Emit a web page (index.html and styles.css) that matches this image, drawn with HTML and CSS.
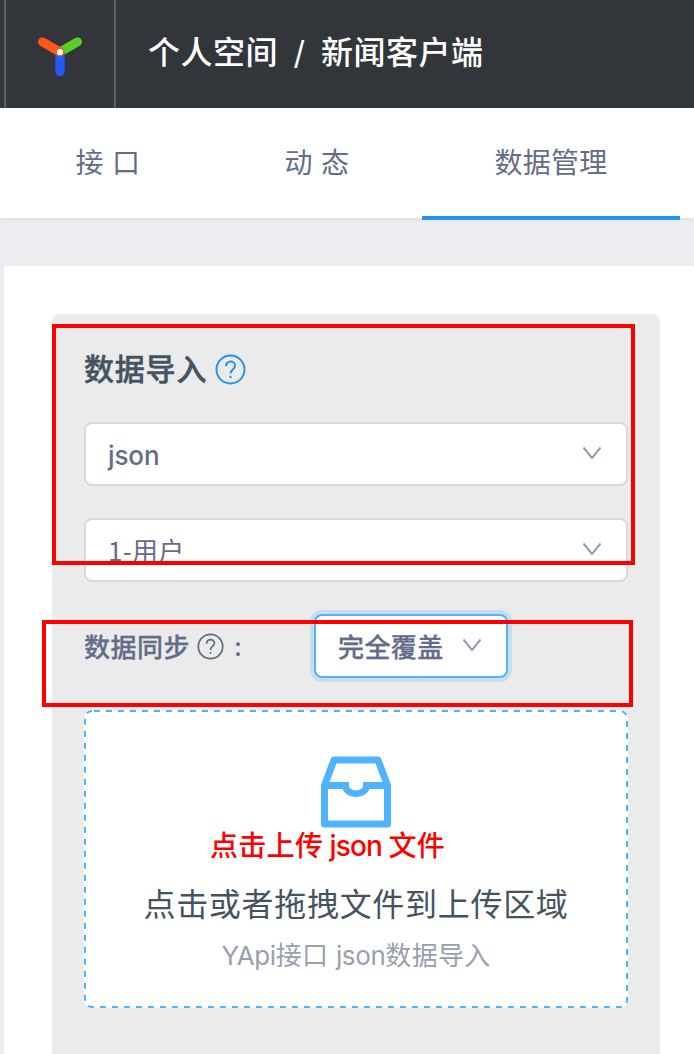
FILE: index.html
```html
<!DOCTYPE html>
<html lang="zh-CN">
<head>
<meta charset="utf-8">
<title>新闻客户端 - 数据管理</title>
<link rel="stylesheet" href="styles.css">
</head>
<body>
<header class="header">
  <a class="logo">
    <svg width="46" height="42" viewBox="0 0 46 42" fill="none" stroke-linecap="round">
      <path d="M23 18L40.500 7.900" stroke="#57cf27" stroke-width="9"/>
      <path d="M23 20V37.500" stroke="#2459f6" stroke-width="9.300"/>
      <path d="M5.500 7.900L23 18" stroke="#ff561b" stroke-width="9"/>
      <circle cx="23" cy="18" r="3.100" fill="#fff"/>
    </svg>
  </a>
  <div class="breadcrumb"><span>个人空间</span><span class="slash">/</span><span>新闻客户端</span></div>
</header>
<nav class="tabs">
  <a class="tab">接 口</a>
  <a class="tab">动 态</a>
  <a class="tab tab-active">数据管理</a>
</nav>
<main class="content">
  <section class="panel">
    <h2 class="title"><span class="title-text">数据导入</span>
      <svg class="help" width="31" height="31" viewBox="0 0 31 31" fill="none" stroke="currentColor" stroke-width="2">
        <circle cx="15.500" cy="15.500" r="14"/>
        <path d="M11 12.300C11 9.300 13 7.600 15.500 7.600S20 9.400 20 11.900C20 15 15.600 15.500 15.600 19.400"/>
        <circle cx="15.500" cy="23" r="1.200" fill="currentColor" stroke="none"/>
      </svg>
    </h2>
    <div class="select"><span class="medium latin">json</span><svg class="arrow" width="20" height="14" viewBox="0 0 20 14"><path d="M1.500 1.500L10 12L18.500 1.500"/></svg></div>
    <div class="select"><span class="category">1-用户</span><svg class="arrow" width="20" height="14" viewBox="0 0 20 14"><path d="M1.500 1.500L10 12L18.500 1.500"/></svg></div>
    <div class="sync">
      <div class="sync-label"><span class="raised">数据同步</span>
        <svg class="help-small" width="27" height="27" viewBox="0 0 31 31" fill="none" stroke="currentColor" stroke-width="2">
          <circle cx="15.500" cy="15.500" r="14"/>
          <path d="M11 12.300C11 9.300 13 7.600 15.500 7.600S20 9.400 20 11.900C20 15 15.600 15.500 15.600 19.400"/>
          <circle cx="15.500" cy="23" r="1.200" fill="currentColor" stroke="none"/>
        </svg><span class="colon">:</span>
      </div>
      <div class="select select-focus"><span class="medium raised">完全覆盖</span><svg class="arrow" width="20" height="14" viewBox="0 0 20 14"><path d="M1.500 1.500L10 12L18.500 1.500"/></svg></div>
    </div>
    <div class="upload">
      <svg class="outline" width="544" height="298"><rect x="1" y="1" width="542" height="296" rx="7" fill="none" stroke="#4fb3fd" stroke-width="2" stroke-dasharray="6 6" stroke-dashoffset="-2"/></svg>
      <svg class="inbox" width="72" height="72" viewBox="0 0 72 72" fill="none" stroke="#4fb3fd" stroke-width="7" stroke-linejoin="round">
        <path d="M4.500 29.500L14 4H58L67.500 29.500V68H4.500Z"/>
        <path d="M4.500 29.500H25.500C25.500 34.500 30.500 37.700 36 37.700S46.500 34.500 46.500 29.500H67.500" stroke-linejoin="miter"/>
      </svg>
      <p class="upload-text">点击或者拖拽文件到上传区域</p>
      <p class="upload-hint"><span class="tight">YApi</span>接口 <span class="tight">json</span>数据导入</p>
      <span class="note">点击上传 <span class="tight">json</span> 文件</span>
    </div>
    <div class="mark mark-source"></div>
    <div class="mark mark-sync"></div>
  </section>
</main>
</body>
</html>
```
FILE: styles.css
```css
* { box-sizing: border-box; }
body {
  margin: 0;
  height: 1054px;
  overflow: hidden;
  display: flex;
  flex-direction: column;
  background: #ecedf1;
  color: #636c88;
  font-family: Inter, "Noto Sans CJK SC", sans-serif;
  font-size: 26px;
}
p, h2 { margin: 0; }
svg { display: block; flex: none; }
.header {
  height: 108px;
  flex: none;
  display: flex;
  padding-left: 4px;
  background: #32363a;
}
.logo {
  width: 112px;
  padding: 34px 0 0 31px;
  border-left: 2px solid #56626d;
  border-right: 2px solid #56626d;
}
.breadcrumb {
  display: flex;
  padding-left: 32px;
  color: #fff;
  font-size: 32px;
  font-weight: 500;
  line-height: 106px;
  letter-spacing: .5px;
}
.slash { width: 43px; text-align: center; font-weight: 400; }
.tabs {
  position: relative;
  height: 110px;
  flex: none;
  display: flex;
  gap: 1px;
  padding-left: 4px;
  background: #fff;
  box-shadow: 0 2px 4px rgba(0, 21, 41, .06);
}
.tab {
  width: 208px;
  height: 112px;
  text-align: center;
  font-size: 28px;
  line-height: 110px;
  letter-spacing: .3px;
}
.tab-active { width: 258px; border-bottom: 4px solid #2395f1; }
.content {
  flex: 1;
  margin: 48px 0 0 4px;
  padding: 48px 34px 0 48px;
  background: #fff;
}
.panel {
  position: relative;
  height: 760px;
  padding: 32px;
  border-radius: 8px;
  background: #ebebeb;
}
.title {
  display: flex;
  align-items: center;
  gap: 8px;
  height: 46px;
  margin-bottom: 30px;
  color: #455361;
  font-size: 30px;
  font-weight: 500;
  letter-spacing: .8px;
}
.title-text {
  padding-bottom: 4px;
  -webkit-text-stroke: .5px currentColor;
}
.help { color: #2395f1; }
.select {
  display: flex;
  align-items: center;
  justify-content: space-between;
  height: 64px;
  margin-bottom: 32px;
  padding: 0 24px 0 22px;
  border: 2px solid #d9d9d9;
  border-radius: 8px;
  background: #fff;
  letter-spacing: .4px;
}
.medium { font-weight: 500; }
.latin { padding-top: 2px; letter-spacing: -.1px; }
.category {
  padding-bottom: 2px;
  font-family: "Noto Sans CJK SC", sans-serif;
  letter-spacing: .3px;
}
.raised { padding-bottom: 2px; -webkit-text-stroke: .3px currentColor; }
.arrow { margin-top: -2px; fill: none; stroke: #979db0; stroke-width: 2; }
.sync { display: flex; }
.sync-label {
  display: flex;
  align-items: center;
  width: 230px;
  height: 64px;
  font-weight: 500;
  letter-spacing: .5px;
}
.help-small { margin-left: 7px; }
.colon { margin-left: 10px; }
.select-focus {
  width: 194px;
  border-color: #4fb3fd;
  box-shadow: 0 0 0 4px #c6dcef;
}
.upload {
  position: relative;
  height: 298px;
  display: flex;
  flex-direction: column;
  align-items: center;
  padding-top: 46px;
  border-radius: 8px;
  background: #fff;
}
.outline { position: absolute; left: 0; top: 0; }
.upload-text {
  margin-top: 53px;
  color: #455361;
  font-size: 32px;
  line-height: 48px;
  letter-spacing: .7px;
}
.upload-hint { margin-top: 7px; color: #999fb0; line-height: 40px; letter-spacing: .3px; }
.tight { letter-spacing: -.4px; }
.note {
  position: absolute;
  left: 126px;
  top: 117px;
  color: #f00;
  font-size: 28px;
  font-weight: 500;
  line-height: 38px;
  white-space: nowrap;
  letter-spacing: .3px;
  word-spacing: -1.5px;
}
.note .tight { letter-spacing: -.8px; }
.mark { position: absolute; border: 4px solid #f00; }
.mark-source { left: 0; top: 10px; width: 583px; height: 241px; }
.mark-sync { left: -10px; top: 306px; width: 591px; height: 87px; }
```
